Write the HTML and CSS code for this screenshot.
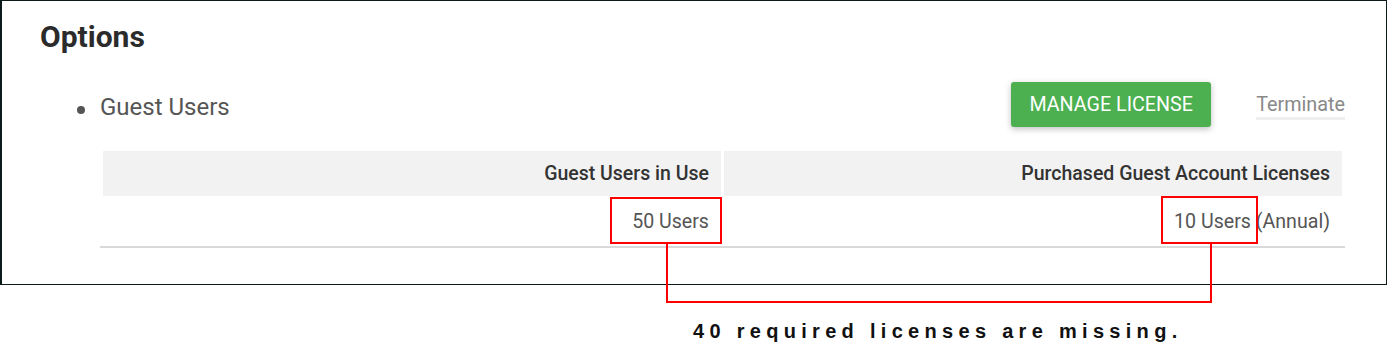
FILE: index.html
```html
<!DOCTYPE html>
<html lang="en">
<head>
    <meta charset="UTF-8">
    <meta name="viewport" content="width=device-width, initial-scale=1.0">
    <title>Options</title>
    <link rel="stylesheet" href="styles.css">
</head>
<body>
    <div class="panel">
        <h2 class="title">Options</h2>
        <div class="option-row">
            <ul class="option-list">
                <li>Guest Users</li>
            </ul>
            <button class="btn-manage">MANAGE LICENSE</button>
            <a class="terminate" href="#">Terminate</a>
        </div>
        <div class="license-table">
            <div class="th">Guest Users in Use</div>
            <div class="th">Purchased Guest Account Licenses</div>
            <div class="td">50 Users</div>
            <div class="td">10 Users (Annual)</div>
        </div>
    </div>

    <!-- 설명용 빨간 표시 -->
    <div class="mark mark-use"></div>
    <div class="mark mark-bought"></div>
    <div class="connector"></div>

    <p class="note">40 required licenses are missing.</p>
</body>
</html>
```

FILE: styles.css
```css
body{
    margin: 0;
    font-family: Roboto, "Noto Sans", sans-serif;
    background-color: #fff;
}

.panel{
    box-sizing: border-box;
    width: 1387px;
    height: 285px;
    border: 1px solid #0b1a1a;
    border-left-width: 2px;
    padding: 0 41px 0 38px;
}

.title{
    margin: 18px 0 0 0;
    font-size: 30px;
    line-height: 36px;
    font-weight: 700;
    color: #2b2b2b;
}

.option-row{
    display: flex;
    align-items: center;
    margin-top: 27px;
}

.option-list{
    flex: 1;
    margin: 0;
    padding: 4px 0 0 60px;
    list-style: none;
}
.option-list li{
    position: relative;
    font-size: 24px;
    color: #555;
}
.option-list li::before{
    content: "";
    position: absolute;
    left: -23px;
    top: 13px;
    width: 8px;
    height: 8px;
    border-radius: 50%;
    background-color: #555;
}

.btn-manage{
    width: 200px;
    height: 45px;
    border: 0;
    border-radius: 3px;
    background-color: #4caf50;
    color: #fff;
    font-family: Roboto, sans-serif;
    font-size: 19.7px;
    box-shadow: 0 2px 6px rgba(0, 0, 0, 0.25);
}

.terminate{
    margin: 4px 0 0 45px;
    font-size: 19.8px;
    color: #888;
    text-decoration: none;
    border-bottom: 3px solid #efefef;
    padding-bottom: 1px;
}

.license-table{
    display: grid;
    grid-template-columns: 1fr 1fr;
    gap: 3px;
    margin: 21px 0 0 60px;
    padding: 3px 3px 2px 3px;
    border-bottom: 2px solid #d9d9d9;
}
.th{
    height: 45px;
    line-height: 45px;
    padding-right: 12px;
    text-align: right;
    background-color: #f2f2f2;
    font-size: 19.5px;
    font-weight: 500;
    color: #333;
}
.td{
    height: 45px;
    line-height: 45px;
    padding-right: 12px;
    text-align: right;
    font-size: 19.6px;
    color: #555;
}

.mark{
    position: absolute;
    box-sizing: border-box;
    border: 2px solid #f00;
}
.mark-use{
    left: 610px;
    top: 197px;
    width: 112px;
    height: 47px;
}
.mark-bought{
    left: 1161px;
    top: 196px;
    width: 97px;
    height: 48px;
}
.connector{
    position: absolute;
    box-sizing: border-box;
    left: 666px;
    top: 244px;
    width: 546px;
    height: 59px;
    border: 2px solid #f00;
    border-top: 0;
}

.note{
    margin: 35px 0 0 693px;
    font-family: "Liberation Sans", Arial, sans-serif;
    font-size: 20px;
    font-weight: 700;
    letter-spacing: 5.3px;
    color: #111;
}
```
